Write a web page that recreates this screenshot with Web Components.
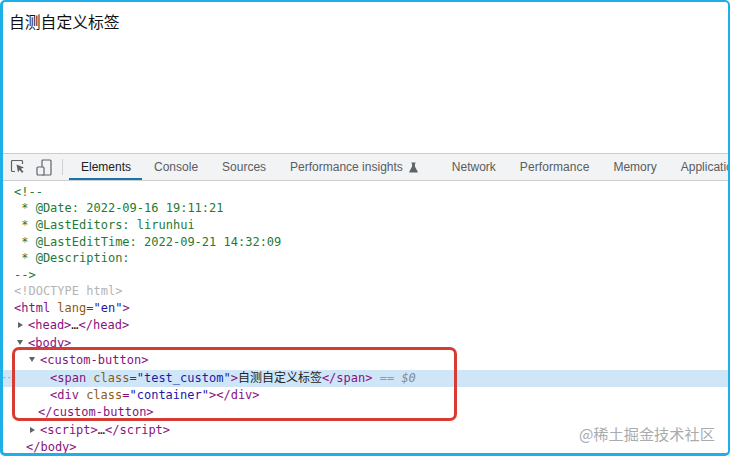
<!DOCTYPE html>
<html lang="zh">
<head>
<meta charset="utf-8">
<title>自测自定义标签</title>
<style>
  html, body { margin: 0; padding: 0; background: #fff; }
  body { width: 730px; height: 457px; overflow: hidden; }
</style>
</head>
<body>
<app-frame>
  <page-view slot="page">自测自定义标签</page-view>
  <dt-toolbar slot="tools">
    <dt-tab active>Elements</dt-tab>
    <dt-tab>Console</dt-tab>
    <dt-tab>Sources</dt-tab>
    <dt-tab flask>Performance insights</dt-tab>
    <dt-tab>Network</dt-tab>
    <dt-tab style="letter-spacing:.08px">Performance</dt-tab>
    <dt-tab>Memory</dt-tab>
    <dt-tab>Application</dt-tab>
  </dt-toolbar>
  <dom-tree slot="tree">
    <dom-line x="14"><span class="c">&lt;!--</span></dom-line>
    <dom-line x="14"><span class="c"> * @Date: 2022-09-16 19:11:21</span></dom-line>
    <dom-line x="14"><span class="c"> * @LastEditors: lirunhui</span></dom-line>
    <dom-line x="14"><span class="c"> * @LastEditTime: 2022-09-21 14:32:09</span></dom-line>
    <dom-line x="14"><span class="c"> * @Description:</span></dom-line>
    <dom-line x="14"><span class="c">--&gt;</span></dom-line>
    <dom-line x="14"><span class="d">&lt;!DOCTYPE html&gt;</span></dom-line>
    <dom-line x="14" tall><span class="t">&lt;html</span> <span class="a">lang</span><span class="t">=</span><span class="v">"en"</span><span class="t">&gt;</span></dom-line>
    <dom-line x="28" tall arrow="closed"><span class="t">&lt;head&gt;</span><span class="k">…</span><span class="t">&lt;/head&gt;</span></dom-line>
    <dom-line x="28" tall arrow="open"><span class="t">&lt;body&gt;</span></dom-line>
    <dom-line x="40" tall arrow="open"><span class="t">&lt;custom-button&gt;</span></dom-line>
    <dom-line x="50" tall selected><span class="t">&lt;span</span> <span class="a">class</span><span class="t">=</span><span class="v">"test_custom"</span><span class="t">&gt;</span><span class="k">自测自定义标签</span><span class="t">&lt;/span&gt;</span> <span class="e">==</span> <span class="s">$0</span></dom-line>
    <dom-line x="50" tall><span class="t">&lt;div</span> <span class="a">class</span><span class="t">=</span><span class="v">"container"</span><span class="t">&gt;&lt;/div&gt;</span></dom-line>
    <dom-line x="38" tall><span class="t">&lt;/custom-button&gt;</span></dom-line>
    <dom-line x="40" tall arrow="closed"><span class="t">&lt;script&gt;</span><span class="k">…</span><span class="t">&lt;/script&gt;</span></dom-line>
    <dom-line x="26" tall><span class="t">&lt;/body&gt;</span></dom-line>
  </dom-tree>
</app-frame>
<script>
// frame round the whole capture, plus the two things drawn on top of it
class AppFrame extends HTMLElement {
  connectedCallback() {
    const root = this.attachShadow({ mode: 'open' });
    root.innerHTML = `
      <style>
        :host { display: block; width: 730px; height: 456px; position: relative; box-sizing: border-box;
                border: 2px solid #1eaee8; border-left-width: 3px; border-bottom-width: 3px; border-radius: 5px;
                overflow: hidden; background: #fff; }
        .mark { position: absolute; left: 576px; top: 421px; color: #a9abad; white-space: nowrap;
                font: 15.2px/20px "Noto Sans CJK SC", "Liberation Sans", sans-serif; }
        .box { position: absolute; left: 9px; top: 345px; width: 445px; height: 74px; box-sizing: border-box;
               border: 3px solid #d83b32; border-radius: 7px; }
      </style>
      <slot name="page"></slot>
      <slot name="tools"></slot>
      <slot name="tree"></slot>
      <div class="box"></div>
      <div class="mark">@稀土掘金技术社区</div>`;
  }
}
customElements.define('app-frame', AppFrame);

class PageView extends HTMLElement {
  connectedCallback() {
    const root = this.attachShadow({ mode: 'open' });
    root.innerHTML = `
      <style>
        :host { display: block; height: 151px; box-sizing: border-box; padding: 9px 0 0 6px; color: #111;
                font: 15.8px/22px "Noto Sans CJK SC", "Liberation Sans", sans-serif; }
      </style>
      <slot></slot>`;
  }
}
customElements.define('page-view', PageView);

class DtToolbar extends HTMLElement {
  connectedCallback() {
    const root = this.attachShadow({ mode: 'open' });
    root.innerHTML = `
      <style>
        :host { display: flex; align-items: stretch; height: 28px; box-sizing: border-box; background: #f1f3f4;
                border-top: 1px solid #cbcdcf; border-bottom: 1px solid #cbcdcf; overflow: hidden; }
        .icons { display: flex; align-items: center; gap: 11px; flex: none; width: 60px; box-sizing: border-box; padding-left: 7px; position: relative; }
        .icons::after { content: ""; position: absolute; right: 0; top: 5px; bottom: 5px; width: 1px; background: #cfd1d3; }
        svg { display: block; flex: none; }
        .tabs { display: flex; margin-left: 6px; }
      </style>
      <div class="icons">
        <svg width="15" height="16" viewBox="0 0 15 16" fill="none">
          <path d="M12.5 5V2.5a1 1 0 0 0-1-1h-9a1 1 0 0 0-1 1v9a1 1 0 0 0 1 1H5" stroke="#5f6368" stroke-width="1.2"/>
          <path d="M6.5 5.5l7.5 3-3.1 1.2 2.6 3-1.4 1.2-2.5-3-1.6 2.7z" fill="#5f6368"/>
        </svg>
        <svg width="16" height="17" viewBox="0 0 16 17" fill="none" stroke="#5f6368" stroke-width="1.2">
          <rect x="6" y="1" width="9" height="15" rx="1"/>
          <rect x="1" y="8" width="7" height="8" rx="1" fill="#f1f3f4"/>
        </svg>
      </div>
      <div class="tabs"><slot></slot></div>`;
  }
}
customElements.define('dt-toolbar', DtToolbar);

class DtTab extends HTMLElement {
  connectedCallback() {
    const root = this.attachShadow({ mode: 'open' });
    const flask = this.hasAttribute('flask')
      ? `<svg width="9" height="11" viewBox="0 0 10 11" preserveAspectRatio="none"><path d="M2.7 .5h4.6v1H6.6v3l3.1 5.2c.2.4 0 .8-.5.8H.8c-.5 0-.7-.4-.5-.8l3.1-5.2v-3H2.7z" fill="#5f6368"/></svg>`
      : '';
    root.innerHTML = `
      <style>
        :host { display: flex; align-items: center; gap: 6px; flex: none; height: 100%; box-sizing: border-box;
                padding: 0 12px; color: #5a5d61; white-space: nowrap; position: relative;
                font: 12px/16px "Liberation Sans", Arial, sans-serif; }
        :host([flask]) { padding-right: 22px; }
        :host([active]) { color: #202124; padding-right: 11px; }
        :host([active])::after { content: ""; position: absolute; left: 0; right: 0; bottom: 0; height: 2px; background: #1a73a8; }
      </style>
      <slot></slot>${flask}`;
  }
}
customElements.define('dt-tab', DtTab);

class DomTree extends HTMLElement {
  connectedCallback() {
    const root = this.attachShadow({ mode: 'open' });
    root.innerHTML = `
      <style>
        :host { display: block; padding-top: 2.8px; margin-left: -3px; }
      </style>
      <slot></slot>`;
  }
}
customElements.define('dom-tree', DomTree);

// one row of the elements tree; x is where the text starts, the arrow sits just before it
class DomLine extends HTMLElement {
  connectedCallback() {
    const root = this.attachShadow({ mode: 'open' });
    const arrow = this.getAttribute('arrow');
    root.innerHTML = `
      <style>
        :host { display: block; height: 16.6px; box-sizing: border-box; position: relative; color: #222;
                font: 12px/16.6px "DejaVu Sans Mono", "Noto Sans CJK SC", monospace;
                padding-left: ${this.getAttribute('x')}px; }
        :host([tall]) { height: 17.4px; line-height: 17.4px; }
        slot { white-space: pre; }
        :host([selected]) { background: #cfe6f9; }
        :host([selected])::before { content: "···"; position: absolute; left: 2px; top: 0; color: #7d8a94;
                font-size: 8px; letter-spacing: 0; }
        .arrow { position: absolute; left: ${+this.getAttribute('x') - 10}px; top: 5px; width: 0; height: 0; }
        .closed { border-left: 5px solid #5f6368; border-top: 3.5px solid transparent; border-bottom: 3.5px solid transparent; }
        .open { border-top: 5px solid #5f6368; border-left: 3.5px solid transparent; border-right: 3.5px solid transparent; margin-left: -1px; }
        ::slotted(.c) { color: #1f7a33; }
        ::slotted(.d) { color: #b5b5b5; }
        ::slotted(.t) { color: #881280; }
        ::slotted(.a) { color: #8f5a12; }
        ::slotted(.v) { color: #1a1aa6; }
        ::slotted(.k) { color: #222; }
        ::slotted(.e) { color: #8b98a3; }
        ::slotted(.s) { color: #7f8c97; font-style: italic; }
      </style>
      ${arrow ? `<span class="arrow ${arrow}"></span>` : ''}<slot></slot>`;
  }
}
customElements.define('dom-line', DomLine);
</script>
</body>
</html>
